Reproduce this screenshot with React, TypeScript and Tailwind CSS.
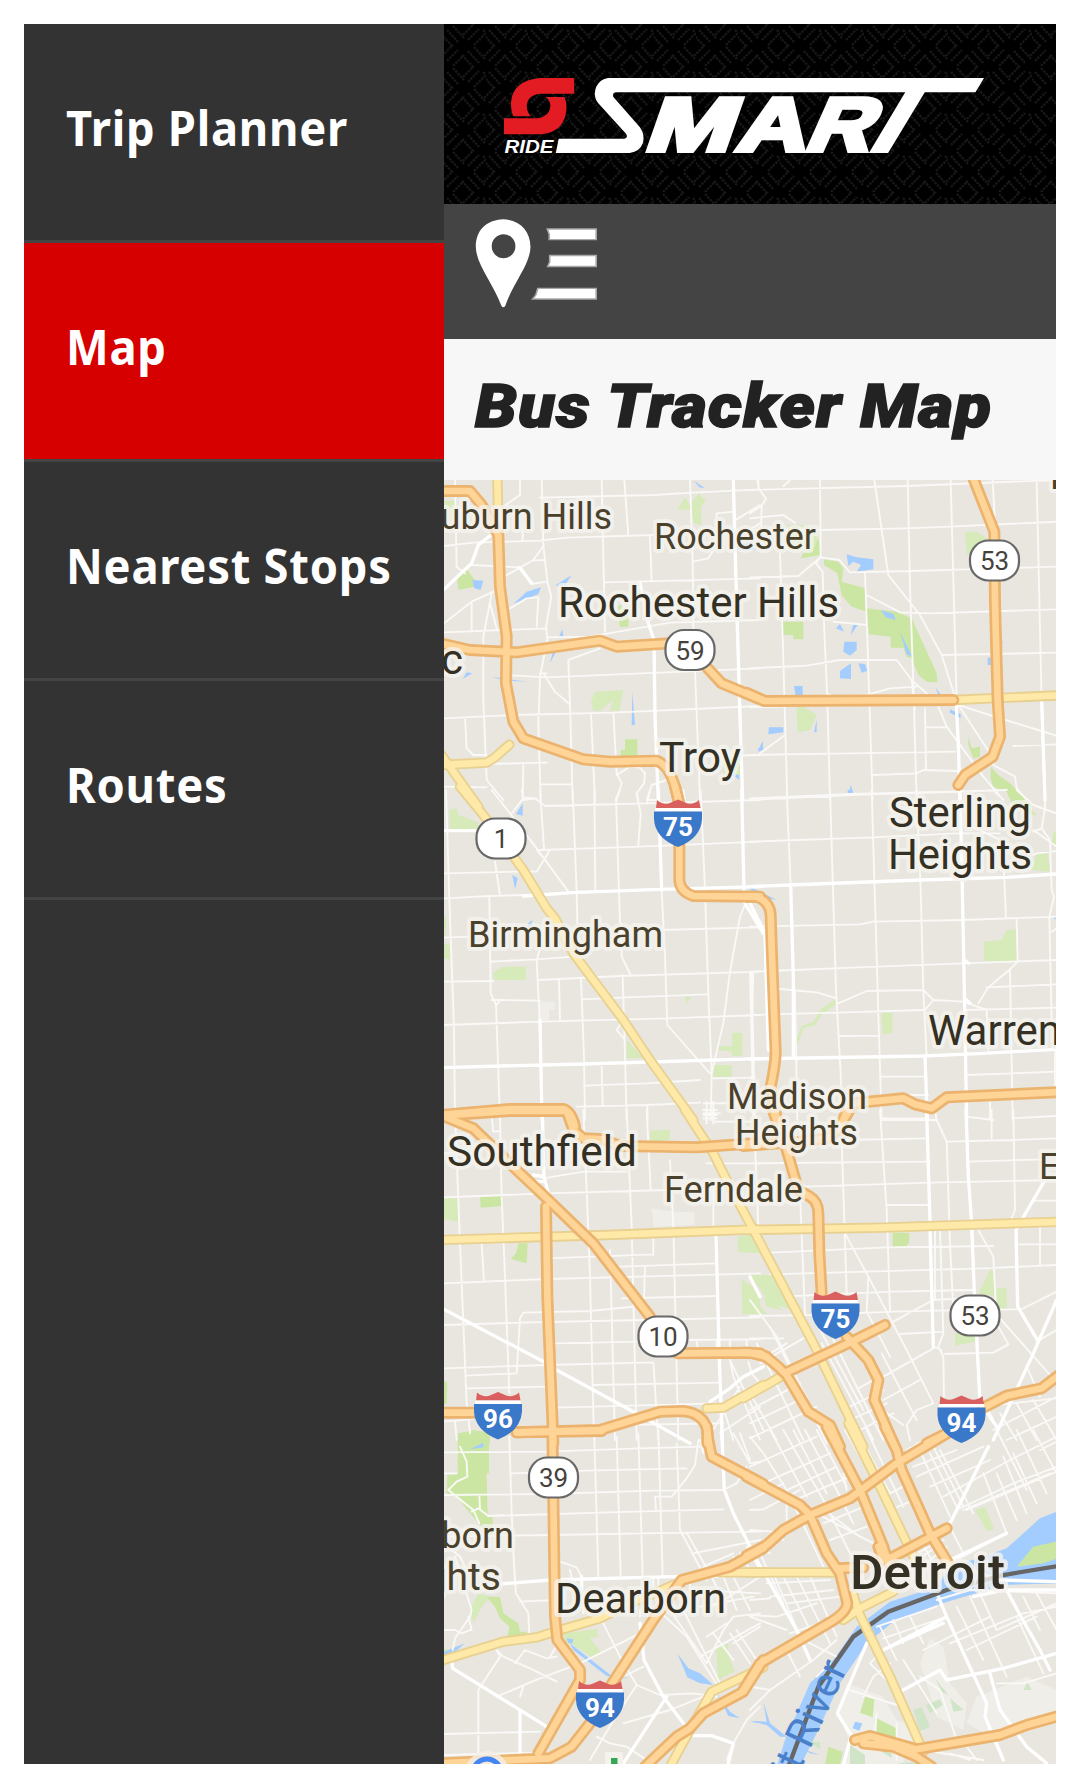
import React from "react";

type Tile = {
  x: number;
  y: number;
  park?: string;
  lightPark?: string;
  built?: string;
  water?: string;
  minor: string;
  major: string;
  yellow: string;
  highway: string;
};

/* Map geometry, split in sheets. Each sheet is drawn at three units per pixel from its own origin. */
const tiles: Tile[] = [
  {
    x: 440,
    y: 470,
    park: "M50 315 82 300 105 330V350L55 360ZM555 808H592V858H542V840H555ZM530 410 545 405 565 440V470H540Z",
    lightPark: "M12 92H45V150H12ZM712 120 735 82 750 105 775 70 798 92 782 110 785 165 760 160 755 118ZM465 665 550 660 538 722H510L520 690 480 722H460L453 695ZM850 870 900 850V915H850Z",
    water: "M97 330 130 332 122 360 103 355ZM220 402 260 365 303 352 295 372ZM345 347 395 315 375 345ZM358 498 367 478 370 500ZM330 580 340 540 348 545ZM68 627 80 607 97 610ZM155 620 200 627 262 635 195 632ZM577 665 585 765H575ZM762 32 795 55 778 52ZM890 225 950 215V240H890ZM955 835V845L970 840ZM870 910 898 915V930Z",
    minor:
      "M45 30 50 290 75 310M240 30V75L190 110M305 30 310 225 322 335 334 380 318 470 322 510 300 620 295 760 302 990M12 228 100 218 300 212 380 203 640 195M300 83 640 75 760 68 960 58M485 30 495 485M553 30 565 195M630 195 635 335M495 337 960 325M750 30 758 270 760 470 780 990M12 460 95 395 160 365M95 395V480M12 487 190 480 320 475M248 170V210M312 225 280 270 195 318M235 290 275 342 320 335M280 272 312 270M95 285 235 292M210 415 260 385 295 382 290 470M155 370 130 500V690L140 930 190 990M150 400 170 475M320 502 450 500 690 458 960 450M385 570 390 700 398 990M385 570 480 535M200 615 320 622 960 595M310 610 345 665 388 702M300 610H320M12 745 220 735 520 728 960 708M75 742 80 835 100 855H140M12 885 320 878M250 880 248 990 290 985M305 943H395M12 950 140 952M453 730 465 990M520 728 530 910 545 940 530 990M530 915 570 890 600 893 615 910 612 940 590 970 595 990M655 990 620 990 635 945 680 930M758 275 805 265 825 235 830 130 880 125M890 148 960 105M890 205 960 160M740 860 960 855M955 30V50",
    major: "M0 370 95 280 115 225 165 185M880 30 887 300 893 500 900 740 908 990M600 340 622 450 642 510 645 740 655 990M240 293 275 340",
    yellow: "M172 20 176 200M0 885 140 878 165 862 208 824M-10 835 115 1010",
    highway: "M0 63H90L125 105 175 195 180 350 200 500 198 640 220 755 250 805 430 868 510 875 650 872Q700 890 718 1010M0 520 90 540 230 547 480 512 530 530 690 520M780 570 845 640 970 692",
  },
  {
    x: 750,
    y: 470,
    park: "M222 268 265 275 280 295 275 335 345 355 350 415 440 425 485 445 560 610 562 637 530 635 505 615 485 565 470 560 460 533H422V500L357 493 350 425 305 410 275 375 262 310 222 285ZM98 455H160V508H130V495H98ZM205 200 212 255 152 265 160 250 195 230ZM655 800 665 835 690 830V860L670 865 655 825ZM722 890 745 915 780 940 850 1010H790L770 965 730 950 722 925Z",
    lightPark: "M645 185 680 185 710 205V245L650 255ZM140 710H160L200 735 180 780 142 787ZM110 165H170L200 185V240H130Z",
    water: "M290 253 320 262 370 268V298L320 305 333 285 310 275 295 288ZM283 515 320 515V540L300 557 280 545ZM270 603 303 580V627L270 625ZM325 580 345 582 352 603 335 608ZM258 475 270 462 282 485ZM310 463 323 465 302 495ZM132 648H158V678H137ZM57 772H100V787L55 793ZM192 787 200 750V785ZM25 840 38 812 40 840ZM392 420 430 432 437 450 410 443ZM450 485 487 560 470 553ZM556 652 575 678 565 675ZM600 718 632 733V745L600 728ZM295 970 303 945 310 973ZM752 490 758 520 750 525ZM713 563H725V585H713Z",
    minor:
      "M-5 60 470 48 920 30M22 30 28 60 48 85 35 108 0 130M120 30 100 48M210 30 212 260M0 180H200L470 175 600 170 920 155M0 145 100 135 135 158M373 30 395 180 415 315 510 435 575 555 618 690M473 30 480 350 490 640 500 990M602 30 612 400 620 700M728 30 737 200M860 30 870 480 878 820 885 990M0 322 145 318 212 262 268 270 300 307 480 303 650 298 920 290M212 260 198 280 218 305 222 460 232 690 240 990M90 250 98 500 112 990M345 307 352 510 358 690 368 990M350 375 450 427 540 430 920 418M575 555 920 548M0 595 170 587 270 570 440 570 485 630 530 670M485 630 495 720M240 690 230 670 250 680 350 675 420 655 500 650M0 712 100 710M30 850 105 795M0 855 300 850 615 845M370 915 500 910 520 900 620 903M525 715 528 900M528 772H590M565 710 590 770 700 920 760 990M625 705 720 850 730 885 795 920 800 955 830 990M625 705 750 745 920 797M790 828 920 823M0 990 300 975 770 960M35 108 33 190M250 455 350 465",
    major: "M618 690 625 820 630 990M875 690 885 990",
    yellow: "M610 690 930 676",
    highway: "M-10 668 45 693 610 690M668 20 733 185 735 400 743 690 750 800 728 860 645 915 625 945",
  },
  {
    x: 440,
    y: 790,
    lightPark: "M28 60 50 55 55 75 115 97V118H30ZM158 548 190 530H258V570H165ZM0 380H18V435H0ZM0 460 30 465V507H0ZM560 750 610 805H560ZM820 825H875V860H820ZM876 728H907V797H876V785L835 780V768H876ZM735 620 755 622 740 642Z",
    built: "M300 635H345V660H327V690H300Z",
    water: "M228 72 248 40V77ZM217 255 233 265 225 298ZM265 400 277 390 275 415H265ZM920 290 960 305V320Z",
    minor:
      "M155 0 210 70 290 175 385 305M300 0 312 175M245 0 250 25 215 70M250 22 285 25 315 48 620 40 960 30M398 0 410 305 412 400M463 0 466 300M540 0 528 25 540 400M590 10 602 70 595 165M630 0 622 38M18 0 28 330 42 710 45 990M300 180 600 170 960 155M12 250 230 245 290 245 330 180M290 180 320 215M165 215 180 318M12 325 150 318 250 315M148 320 152 610 168 645 180 990M152 515 290 508 400 500M300 475 290 510 300 710M12 443 90 440M155 630 180 630 300 632M168 645 185 628M12 575 160 573M295 570 540 558 960 545M357 570 360 690M423 565 432 800 435 990M548 555 552 690 555 800 560 990M545 400 545 500 572 555M555 750 530 720 550 690M12 705 300 695 680 685 960 675M425 628 560 622 800 613M665 300 675 500 682 705 810 850M782 0 795 300 805 610 815 850 812 990M660 420 960 412M915 345 900 380 870 545 850 700 815 850M935 545 942 860M820 865 942 863M432 887 620 880 780 870M485 830 488 945M410 950 620 945 780 938M622 945 623 990M790 940H870M790 960H830M790 975H830M800 935V990M820 935V990M830 940 960 935M730 0 735 30",
    major: "M250 318 410 307 660 298 960 290M0 122H110M905 0 912 300M655 0 665 300M915 340 970 430M0 833 180 828 430 822 960 806M300 690 306 990",
    yellow: "M60 -10 130 75 250 240 320 355 345 385 400 490 550 690 630 810 760 990",
    highway: "M705 -10 718 40 718 270Q720 305 760 318L960 320M0 975 210 957H370Q395 965 405 1010",
  },
  {
    x: 750,
    y: 790,
    park: "M770 0H795L858 75 830 70Z",
    lightPark: "M702 455 755 450 770 420 797 418 802 513H702ZM395 668H428V730L397 733ZM845 240 858 190H893L900 245ZM905 165 910 125H920V165ZM262 625V640L215 675 195 705 160 715 143 765 140 745 155 708 190 695 215 655Z",
    water: "M293 0H308V12H293ZM0 290 80 330 30 320ZM910 385 920 378V388Z",
    minor:
      "M0 25 300 12 620 5M110 0 122 290M240 0 258 600 272 850 275 990M365 0 380 500 392 900 395 990M500 0 512 300 520 600 530 800M0 155 370 142 620 130 750 130M655 105 710 130 770 160 760 200 768 385M730 0 750 20M800 0 850 45 918 70M885 0V55L875 115 900 150 905 300 912 320 898 380 905 700M850 120 920 170M850 125 875 115M850 195 860 190 920 183M0 410 330 403 370 395 640 390 920 380M800 390 803 510M0 545 380 530 640 520 920 510M90 597 200 607 260 625M265 640 350 603 520 600 550 630 525 660M550 630 640 635 710 660M685 640 715 592 780 538 803 515M710 592 920 583M780 538 788 990M0 675 260 668 520 660M650 660 920 653M10 545 5 720 15 990M0 545 10 990M135 600 142 990M270 738 385 737M390 860H525M650 855 790 850 920 845M710 660 715 780M915 780V910M395 985H525M480 915H535M720 935V990M790 985 920 978M650 980 730 990M905 425 920 415M0 862H15",
    major: "M-5 290 120 285 510 270 770 262 920 252M122 285 130 560 130 800M630 0 637 300 643 600 650 990M0 340 45 430 55 780M0 807 520 798 700 790 920 778M525 800 532 990M643 510 655 520M643 625 660 640",
    yellow: "",
    highway: "M-10 320H20Q60 335 62 375L65 470 77 790Q75 830 62 890L85 1010M270 1010 310 940 460 925 495 943 545 955 590 922 930 906",
  },
  {
    x: 440,
    y: 1110,
    park: "M120 262 187 258V288L122 293ZM235 400H263L260 460 212 447 228 430ZM0 800 22 820 20 880 0 890ZM55 970 90 963 150 965V1000H55Z",
    lightPark: "M0 265H55V335L0 325ZM630 62 690 60V90L630 95ZM893 380 960 370V430L895 427ZM905 507 960 545V612H907ZM925 497 970 495V545Z",
    built: "M635 295 700 305 763 307V345L640 350Z",
    minor:
      "M45 10 60 400 80 880 90 970M155 20 160 65 180 63M180 20 185 260 195 500 208 850M430 0 440 240 450 500 462 990M560 0 575 350 590 990M620 0 632 240M690 150 700 350 715 990M12 262 320 250 680 240M12 130 45 128M310 205 430 185M430 185H560M12 520 320 507 600 500 960 490M125 400 132 515M320 445 640 433M640 380V435M540 470 830 460M510 420 525 990M615 470 610 620M545 565 830 558M12 645 240 638 610 630 960 622M250 608 450 603 600 588M250 608 240 625 230 790 80 797M345 700 600 695M12 775 320 765 640 757M80 835 320 830M460 825 840 818M350 893 570 887 830 880M640 757 655 990M12 935 90 928 110 925M45 935 50 990M510 945 850 940M720 690 960 688M770 690 775 730M830 688V730M870 690V740M920 690V740M870 750 880 800 960 990M925 755 935 790 960 820M800 160H960M820 230V370M790 10H840M790 25H830M800 0V40M820 0V40M825 35H940M930 500 960 560M840 970 960 890M870 750 970 960M840 860 880 990M900 830 800 990",
    major: "M307 10 312 200 325 250M0 592 330 765 350 780 580 905 750 1000M828 375 838 750 847 990M810 875 870 835 910 800 970 770M280 195 310 200M280 215 310 215",
    yellow: "M0 390 500 375 950 358M735 0 820 130 870 230 935 350M800 895 850 893 970 825",
    highway: "M-10 18 210 3H380L400 60 430 85 490 88 540 108 770 112 970 98M-10 10 100 55 230 180 320 265 460 400 630 620M318 290 322 560 340 1000M712 730 930 728 980 740M0 908H115M230 967 480 960 660 905 730 903Q790 910 802 960V1000",
  },
  {
    x: 750,
    y: 1110,
    park: "M428 368H478V390Q475 412 455 412H428Z",
    lightPark: "M0 380 25 400 20 427H0ZM0 495H65L130 600 60 580ZM0 550 50 612H0ZM685 550 722 478 732 480 738 560ZM740 535H770V595H740ZM615 670H675V695L615 707ZM40 560 100 600 50 590Z",
    minor:
      "M390 0 410 300 420 600M275 90 290 550M150 250 165 615M15 100 25 350M275 90 535 85M20 160 280 157 540 155M395 30H560L590 95 600 400 610 600M165 230 540 218 920 210M410 285H535M555 0 560 30M590 95 790 90 920 85M655 155 880 148M790 0 795 300 785 325M725 0V85M850 272H920M65 428 410 412 730 408M800 403H920M870 350V465M60 493 350 485 700 475 920 465M285 370 355 500 470 720 550 880M355 500 350 605 420 740M130 558 430 545 670 540M0 618 190 615 430 605 560 602 800 598M420 640 550 570 640 565M555 365V570M570 360 580 670 565 710 580 740 582 860M550 710 575 720M450 672 580 665M585 732 730 728 775 703 740 640M685 360 730 440 738 600M750 625 900 795M810 600 920 545M860 695 920 660M400 800 550 715M325 835 370 810M510 810 400 870M550 880 500 900 470 945 480 990M395 730 500 930M740 885 920 865M830 770 870 860M0 570 80 680 210 950M0 685H100M45 740 110 700M160 685 30 760M0 840 130 770M0 900 150 820M0 940 170 860M0 985 200 890M20 700 160 990M0 850 80 990M60 650 230 1000M215 700 370 990M250 690 400 990M280 900 400 840M300 930 410 880M330 960 430 910M200 640 340 900M700 870 730 930M730 960 920 860M770 990 920 920M800 880 860 990M850 870 920 990M750 910 800 990M370 880 460 945",
    major: "M530 10 540 330M540 360 550 710M648 0 655 200 665 340 673 550M680 680 690 880M885 210 815 330 798 360 803 590 865 695M920 570 850 730 730 990M705 900 740 950M0 500 30 560",
    yellow: "M-10 360 400 353 930 335M5 350 190 700 340 1010M-20 865 110 790",
    highway: "M65 -10 110 120 145 240 180 260Q205 275 205 310L208 430 215 550M-20 108 150 95 230 85 270 55 295 -10M-20 728 30 730Q60 745 110 795L175 905 240 945 270 1010M110 787 305 695 405 645M290 680 355 750 385 810 373 870 435 1010M530 1000 590 970M700 893 770 857 875 835 930 793",
  },
  {
    x: 440,
    y: 1430,
    park: "M53 20 100 0 147 10V130H140L143 260H158V310L150 318 90 250 50 200 20 190 22 135 53 132ZM140 500H180L190 550 235 580 240 605 265 605 240 618 203 620 208 590 180 565 165 530Z",
    lightPark: "M90 540 115 490 150 500 120 540 100 580ZM370 610 470 597 475 620 450 625 485 670 460 685 400 645 372 635ZM828 655 865 640 862 665 885 725 850 740 835 755ZM12 655 28 660V675H12ZM12 690 50 655 45 680Z",
    water: "M90 58 130 38V52ZM12 665 75 640 35 675H12ZM380 625 400 628 398 640 385 640ZM390 640 520 742 500 738 400 660ZM712 670 745 715 780 730 820 765 780 760 742 742ZM830 790 870 845 900 865 865 858 852 830ZM930 875 960 875V880ZM535 742 570 745H540ZM100 410 115 430H100Z",
    minor:
      "M12 67 320 65 600 55 780 50M208 20 215 250 225 460M463 20 475 440M530 20 542 440M595 10 608 440M655 0 668 440M215 130 440 122 740 115M12 195 320 192 640 182 850 180M150 258 580 245 850 238M20 320 330 315 740 308 960 305M60 50 80 95 82 140 50 155 25 180 100 240 118 280M95 245 115 235 145 258 190 255M118 195 120 235M775 30 765 105 740 145 695 200H645L648 240M660 200V180M780 30 790 70M710 40 720 300 800 450M740 308 820 450M360 395 410 412 425 440 430 550M220 370 228 490 265 550 268 620M240 515 350 510M12 600 45 600 65 610 95 598M45 380 95 540 90 560 45 625 38 660M95 600 85 560M12 340 60 380 75 410M165 655 190 680 270 715 350 755M180 680 115 780 115 990M180 680 170 660M225 700 255 660 320 685 350 680M170 800 300 745 420 700 600 610M250 770 240 800M360 630 330 680M12 912 300 905M12 975 290 968M450 990 515 880 590 765 540 680 490 580M590 765 660 795 760 790 830 800M550 880 690 840 790 800M470 920 510 940 560 950 620 990M560 735 610 710M860 990 880 940 920 870 960 830M600 540 600 560M670 555 740 620 835 770M690 540 800 700M730 540 840 760M800 700 850 600 880 560 960 550M820 610 880 690M870 610 930 700M890 600 950 690M880 640 960 590M800 620 860 580M780 680 960 580M770 480 960 490M780 530 940 500M820 530 960 440M880 10 930 100 960 95M850 180 890 160 920 110M760 370 960 330M790 410 880 370M880 380 900 410M900 370 930 420M920 350 960 420M850 440 890 540M880 440 930 540M820 450 860 540M390 420 400 470M12 130H50M640 445V470M655 445V470M750 450V480M900 10 930 90",
    major: "M180 462 330 450 700 440 850 438M845 0 853 180 880 250 940 370M600 580 612 690 670 800 730 880M35 690 38 715 240 840V970M240 840 320 890M680 800 550 1000M740 917H815L880 940 865 1000M425 440V480",
    yellow: "M0 693 190 635 290 622 360 600 480 565 560 525 700 465M840 427H980M690 1010 750 900 815 785 970 712",
    highway: "M337 -10 345 560 352 630 420 720 420 750 295 970M510 770 640 570 725 450 870 410 970 355M450 880 395 950 330 985 0 1000M230 7 485 3M800 -10 805 30 815 80 970 162M615 1010 710 920 750 895 790 850 910 785 970 690",
  },
  {
    x: 750,
    y: 1430,
    park: "M345 800 373 808 368 862 330 848ZM380 865 440 895V925H380ZM235 950 278 965 270 1005H225Z",
    lightPark: "M675 240 705 230 732 297 710 303Z",
    built:
      "M290 760 400 800 440 870 520 900 450 1010H270L300 940 265 850ZM540 625 580 650 600 760 650 820 640 900 560 860 530 760 510 700ZM680 800 830 740 920 780V880L740 930 650 880Z",
    water:
      "M80 1010 105 930 180 760 250 690 320 590 420 515 560 470 600 410 700 380 770 355 870 265 925 243V460L760 465 560 525 430 575 350 640 270 760 190 930 150 1010ZM40 815 60 880 110 920 90 920 50 885 0 873 50 875ZM315 875 337 880 328 902 308 895ZM165 960 210 975 180 970Z",
    minor:
      "M0 20 40 70 110 180 230 430M60 0 170 200M100 0 220 210 350 470M130 0 230 190M165 0 260 180 310 280M200 0 290 170M0 110 200 20M40 160 240 70M90 190 260 110M110 220 300 140M0 240 40 238 150 180M110 200V270M220 280 330 235M240 330 350 290M200 250 370 340M215 235 330 320M285 0 370 150 490 390M320 0 420 190M350 0 460 230M370 150 440 115M400 200 460 170M420 240 480 215M0 210 100 160M280 130 290 180M470 60 560 10M490 110 620 60M500 140 700 50M540 170 720 90M580 200 780 90 920 20M620 240 790 160 920 110M650 240 920 125M500 40 600 260M540 70 620 230M540 30 640 230M570 60 670 250M700 130 770 310M740 130 800 270M760 80 830 250M790 70 860 220M740 0 830 180M800 0 890 190M850 0 920 130M870 60 920 35M640 240 900 130M600 290 640 370M770 310 600 400M490 430 590 350M500 370 580 330M500 390 560 350M520 345 550 400M0 300 70 305 100 330M0 350 60 370M30 370 100 520M0 510 60 505M0 555 80 560 200 520M70 430 180 690M100 440 190 620M140 440 240 640M180 440 260 620M50 460 240 450M60 500 250 480M110 520 270 500M120 610 270 560M100 640 150 740M160 630 260 680M0 770 60 780 190 690 260 630M380 590 560 530M400 625 590 560M390 590 440 690M430 570 460 640M480 560 520 640M460 690 560 850M520 660 720 560M620 530 700 690M660 500 770 740M690 490 740 600 920 520M820 500 870 600M860 490 920 600M600 640 820 550 920 530M650 660 860 560M560 510 660 480 920 490M740 760 820 760 920 730M800 560 880 730M420 700 370 740 340 800M380 680 360 700 420 760M300 780 440 825M510 740 570 780 620 930M440 880V990M380 850 375 900M600 970 660 990M650 950 680 990M0 560 110 600M240 700 200 740M60 780 0 840M520 960 700 990",
    major: "M20 390 140 600 180 690M715 50 620 240 595 290M600 390 770 310M565 500 590 560 710 820 705 860 760 990M590 560 400 660M770 480 810 555 870 660 900 720M350 640 262 850 300 910 320 930M300 930 280 1005M450 785 570 720 590 750 760 715 920 670M720 730 750 840 830 950 890 1000M600 400 750 450 920 455M670 500 760 480 920 480M420 650 580 580",
    yellow: "M-10 427H260M295 -20 390 170 500 400M310 495 325 545 420 740 520 965M280 570 330 535 430 485",
    highway: "M-10 140 150 225 180 255 230 370 270 430 292 520Q290 550 230 583L30 700 -20 780M-10 377 50 345 100 300 180 255 300 205 440 100 600 5M230 -10 330 180 400 350 415 400M405 -10 440 60 455 120 540 310 595 400M385 350 400 390 430 380 590 295M270 415 340 412M315 930 360 918 500 958 750 915 830 885 930 857M340 940 430 950 500 980 545 1010",
  },
];

const labels: { t: string; x: number; y: number; w?: number; s: number; end?: boolean; bold?: boolean }[] = [
  { t: "Auburn Hills", x: 612, y: 529, s: 36, end: true },
  { t: "Rochester", x: 654, y: 549, w: 162, s: 36 },
  { t: "Rochester Hills", x: 558, y: 617, w: 281, s: 42 },
  { t: "Pontiac", x: 463, y: 674, s: 42, end: true },
  { t: "Troy", x: 659, y: 772, w: 82, s: 42 },
  { t: "Sterling", x: 889, y: 827, w: 142, s: 42 },
  { t: "Heights", x: 888, y: 869, w: 144, s: 42 },
  { t: "Birmingham", x: 468, y: 947, w: 195, s: 36 },
  { t: "Warren", x: 928, y: 1045, s: 42 },
  { t: "Madison", x: 727, y: 1109, w: 140, s: 36 },
  { t: "Heights", x: 735, y: 1145, w: 123, s: 36 },
  { t: "Southfield", x: 447, y: 1166, w: 190, s: 42 },
  { t: "Ferndale", x: 664, y: 1202, w: 139, s: 36 },
  { t: "Eastpointe", x: 1039, y: 1179, s: 36 },
  { t: "Romeo", x: 1050, y: 489, s: 36 },
  { t: "Dearborn", x: 514, y: 1548, s: 36, end: true },
  { t: "Heights", x: 501, y: 1590, s: 39, end: true },
  { t: "Dearborn", x: 555, y: 1613, w: 171, s: 42 },
  { t: "Detroit", x: 850, y: 1589, w: 155, s: 48, bold: true },
];

const stateShields = [
  { n: "59", x: 690, y: 650 },
  { n: "53", x: 994.5, y: 560.5 },
  { n: "1", x: 501, y: 838.5 },
  { n: "10", x: 663, y: 1336.5 },
  { n: "53", x: 975, y: 1315.5 },
  { n: "39", x: 553.5, y: 1477.5 },
];

const interstates = [
  { n: "75", x: 678, y: 799 },
  { n: "75", x: 835.5, y: 1291 },
  { n: "94", x: 961.5, y: 1395 },
  { n: "96", x: 498, y: 1391.5 },
  { n: "94", x: 600, y: 1680 },
];

function Layer({ pick, stroke, width, fill }: { pick: keyof Tile; stroke?: string; width?: number; fill?: string }) {
  return (
    <g
      fill={fill ?? "none"}
      stroke={stroke}
      strokeWidth={width}
      strokeLinejoin="round"
      strokeLinecap="round"
    >
      {tiles.map((t) => (
        <path key={`${t.x}-${t.y}`} transform={`translate(${t.x} ${t.y}) scale(.33333)`} d={(t[pick] as string) || undefined} />
      ))}
    </g>
  );
}

function TrackerMap() {
  return (
    <svg viewBox="444 480 612 1284" className="block h-[1284px] w-[612px] bg-[#e9e6df]" role="img" aria-label="Bus tracker map of Detroit">
      <Layer pick="built" fill="#f0eee9" />
      <Layer pick="lightPark" fill="#d6eaba" />
      <Layer pick="park" fill="#cae6a2" />
      <Layer pick="water" fill="#a3ccff" />
      <g transform="translate(750 1430) scale(.33333)">
        <path d="M800 410 850 350 925 333V385L880 400Z" fill="#cae6a2" />
        <path
          d="M490 840 515 830 540 890 510 905ZM527 825 570 808 578 825 540 850ZM600 805 642 840 610 845ZM555 745 595 795 575 785ZM820 780 832 757 845 780ZM175 935H210V958ZM300 945 345 975V1005H300ZM445 1000 515 995V1005H445ZM380 955 425 970V985Z"
          fill="#d0e5c8"
        />
      </g>
      <Layer pick="minor" stroke="#faf9f7" width={5.6} />
      <Layer pick="major" stroke="#ffffff" width={10} />
      <path transform="translate(750 1430) scale(.33333)" d="M115 1010 160 890 205 770 310 620 415 545 590 480 760 435 925 408" fill="none" stroke="#666666" strokeWidth={13} />
      <Layer pick="yellow" stroke="#e8d190" width={31} />
      <Layer pick="yellow" stroke="#ffe9a9" width={20} />
      <Layer pick="highway" stroke="#ebb36d" width={36} />
      <Layer pick="highway" stroke="#ffd497" width={20} />

      <g fontFamily="Roboto, sans-serif" strokeLinejoin="round">
        {labels.map((l, i) => (
          <text
            key={i}
            x={l.x}
            y={l.y}
            fontSize={l.s}
            fontWeight={l.bold ? 500 : 400}
            textAnchor={l.end ? "end" : "start"}
            textLength={l.w}
            lengthAdjust="spacingAndGlyphs"
            fill={l.s > 40 ? "#353024" : "#4a412c"}
            stroke="#f5f3ee"
            strokeOpacity={0.8}
            strokeWidth={8}
            paintOrder="stroke"
          >
            {l.t}
          </text>
        ))}
        <text transform="translate(848 1668) rotate(-65)" textAnchor="end" fontSize="41" fill="#4a80c9">
          Detroit River
        </text>
      </g>

      {stateShields.map((s, i) => (
        <g key={i}>
          <rect x={s.x - 24.5} y={s.y - 20} width="49" height="40" rx="18.5" fill="#fff" stroke="#686868" strokeWidth="2.2" />
          <text x={s.x} y={s.y + 9.5} textAnchor="middle" fontFamily="Roboto, sans-serif" fontSize="26" fill="#45423c">
            {s.n}
          </text>
        </g>
      ))}

      {interstates.map((s, i) => (
        <g key={i} transform={`translate(${s.x - 24} ${s.y})`}>
          <path d="M2 9 3 1Q10 7 17 3.5L24 .5 31 3.5Q38 7 45 1L46.500 9Z" fill="#d9605e" />
          <path d="M1.500 9H46.500L47 12.500H1Z" fill="#fff" />
          <path d="M0 12.500H48V20Q47 39 24 48 1 39 0 20Z" fill="#3a78c9" />
          <text x="24" y="36.500" textAnchor="middle" fontFamily="Roboto, sans-serif" fontWeight="700" fontSize="26" fill="#fff">
            {s.n}
          </text>
        </g>
      ))}

      <circle cx="487" cy="1773" r="22" fill="#f4efe6" fillOpacity=".8" />
      <circle cx="487" cy="1773" r="14" fill="none" stroke="#4285f4" strokeWidth="5" />
      <rect x="605" y="1752" width="18" height="12" fill="#f4f2ed" />
      <rect x="611" y="1758" width="6.500" height="6" fill="#34a853" />
    </svg>
  );
}

function Logo() {
  return (
    <svg viewBox="157 174 1176 225" preserveAspectRatio="none" className="h-[75px] w-[480px]" role="img" aria-label="Ride SMART">
      <g fill="#e31b23">
        <path d="M329 174V221H245Q212 226 213 262 214 278 223 289H180Q174 275 174 248 178 182 245 174Z" />
        <path d="M157 343V295H240Q268 290 271 258 270 242 260 231H305Q311 245 310 268 306 335 250 343Z" />
      </g>
      <text x="158" y="398" fontFamily="Liberation Sans, sans-serif" fontWeight="700" fontStyle="italic" fontSize="56" textLength="120" lengthAdjust="spacingAndGlyphs" fill="#fff">
        RIDE
      </text>
      <path
        d="M1333 174 1312 217H1188L1098 399H1051L1140 217H430Q421 220 425 231L490 322Q503 345 497 370 490 395 465 399H284L291 356H452Q462 353 456 341L388 250Q374 228 383 200 392 178 412 174Z"
        fill="#fff"
      />
      <g fontFamily="Liberation Sans, sans-serif" fontWeight="700" fontSize="228" fill="#fff" stroke="#fff" strokeWidth="15">
        <text transform="translate(496 393) skewX(-16)" textLength="214" lengthAdjust="spacingAndGlyphs">M</text>
        <text transform="translate(722 393) skewX(-11)" textLength="172" lengthAdjust="spacingAndGlyphs">A</text>
        <text transform="translate(888 393) skewX(-20)" textLength="158" lengthAdjust="spacingAndGlyphs">R</text>
      </g>
    </svg>
  );
}

function PlatePattern() {
  return (
    <svg className="absolute inset-0 h-full w-full" aria-hidden="true">
      <defs>
        <pattern id="plate" width="42" height="42" patternUnits="userSpaceOnUse">
          <g stroke="#181818" strokeWidth="2.200" strokeDasharray="2.500 1">
            <path d="M3 6 14 18M9 2 20 14M-3 10 8 22M24 27 35 39M30 23 41 35M18 31 29 43M18 -11 29 1M39 6 50 18" />
            <path d="M24 16 35 5M30 21 41 10M19 11 30 0M3 37 14 26M9 42 20 31M-2 32 9 21M40 32 51 21" />
          </g>
        </pattern>
      </defs>
      <rect width="100%" height="100%" fill="url(#plate)" />
    </svg>
  );
}

const items = ["Trip Planner", "Map", "Nearest Stops", "Routes"];

export default function App() {
  return (
    <div className="h-[1772px] w-[1080px] overflow-hidden bg-white p-6">
      <div className="flex h-[1740px] w-[1032px] overflow-hidden">
        <nav className="w-[420px] shrink-0 bg-[#333333]">
          {items.map((item) => (
            <a
              key={item}
              className={
                "flex h-[219px] items-center border-b-[3px] border-[#444444] pb-[9px] pl-[42px] font-['Noto_Sans',sans-serif] text-[49px] leading-none font-bold tracking-[0.8px] whitespace-nowrap text-white " +
                (item === "Map" ? "bg-[#d60000]" : "")
              }
            >
              <span className="origin-left scale-x-[0.925]">{item}</span>
            </a>
          ))}
        </nav>
        <main className="w-[612px] shrink-0">
          <header className="relative h-[180px] bg-black px-[60px] pt-[54px]">
            <PlatePattern />
            <div className="relative">
              <Logo />
            </div>
          </header>
          <div className="h-[135px] bg-[#444444] pt-[15px] pl-[31px]">
            <svg viewBox="86 57 299 268" preserveAspectRatio="none" className="h-[89px] w-[122px]" aria-label="Menu">
              <path
                fillRule="evenodd"
                fill="#fff"
                d="M155 58C113 60 88 92 88 141 89 195 128 245 151 319Q155 327 160 319C181 245 221 195 222 141 221 92 196 60 155 58ZM156 103A29 36 0 1 1 156 175 29 36 0 1 1 156 103Z"
              />
              <g fill="#fff" stroke="#a8a8a8" strokeWidth="4">
                <path d="M263 87H383V119H268V103Z" />
                <path d="M269 167H383V200H264L269 187Z" />
                <path d="M240 266H383V298H227L235 286Z" />
              </g>
            </svg>
          </div>
          <div className="flex h-[141px] items-center bg-[#f7f7f7] pb-[5px] pl-[31px]">
            <h1 className="origin-left scale-x-[1.1] font-['Roboto',sans-serif] text-[61px] font-black tracking-[1.2px] whitespace-nowrap text-[#222222] italic [-webkit-text-stroke:1.5px_#222222]">
              Bus Tracker Map
            </h1>
          </div>
          <TrackerMap />
        </main>
      </div>
    </div>
  );
}
